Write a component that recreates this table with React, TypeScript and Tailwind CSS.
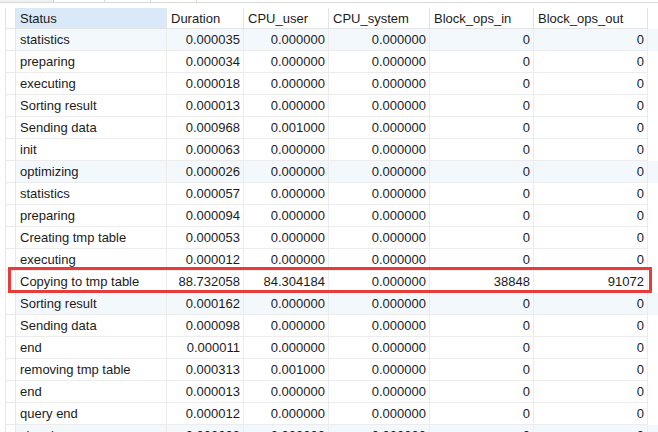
import React from "react";

type Row = {
  status: string;
  duration: string;
  cpuUser: string;
  cpuSystem: string;
  opsIn: string;
  opsOut: string;
};

const z = "0.000000";

const rows: Row[] = [
  ["statistics", "0.000035"],
  ["preparing", "0.000034"],
  ["executing", "0.000018"],
  ["Sorting result", "0.000013"],
  ["Sending data", "0.000968", "0.001000"],
  ["init", "0.000063"],
  ["optimizing", "0.000026"],
  ["statistics", "0.000057"],
  ["preparing", "0.000094"],
  ["Creating tmp table", "0.000053"],
  ["executing", "0.000012"],
  ["Copying to tmp table", "88.732058", "84.304184", z, "38848", "91072"],
  ["Sorting result", "0.000162"],
  ["Sending data", "0.000098"],
  ["end", "0.000011"],
  ["removing tmp table", "0.000313", "0.001000"],
  ["end", "0.000013"],
  ["query end", "0.000012"],
  ["cleaning up", "0.000009"],
].map((r) => ({
  status: r[0],
  duration: r[1],
  cpuUser: r[2] ?? z,
  cpuSystem: r[3] ?? z,
  opsIn: r[4] ?? "0",
  opsOut: r[5] ?? "0",
}));

const cols = [
  { key: "status", label: "Status", w: "w-[151px]", right: false },
  { key: "duration", label: "Duration", w: "w-[77px]", right: true },
  { key: "cpuUser", label: "CPU_user", w: "w-[85px]", right: true },
  { key: "cpuSystem", label: "CPU_system", w: "w-[101px]", right: true },
  { key: "opsIn", label: "Block_ops_in", w: "w-[104px]", right: true },
  { key: "opsOut", label: "Block_ops_out", w: "w-[114px]", right: true },
] as const;

export default function App() {
  return (
    <div
      className="w-[658px] h-[432px] overflow-hidden bg-white text-[13px] text-[#1b1b1b]"
      style={{ fontFamily: '"Liberation Sans", Arial, sans-serif' }}
    >
      {/* tab strip */}
      <div className="flex h-[3px] border-b border-[#d9d9d9]">
        <div className="w-[54px] bg-[#f0f0f0] border-r border-[#d0d0d0]" />
        <div className="w-[51px] border-r border-[#d9d9d9]" />
        <div className="w-[46px] border-r border-[#d9d9d9]" />
        <div className="w-[46px] border-r border-[#d9d9d9]" />
      </div>

      <div className="relative mt-[5px]">
        {/* header */}
        <div className="flex h-[21px] leading-[19px]">
          <div className="w-[5px]" />
          <div className="w-[11px] border-l border-r border-b border-[#e3e3e3]" />
          {cols.map((c, i) => (
            <div
              key={c.key}
              className={`${c.w} pt-[1px] px-[4px] border-r border-b border-[#e3e3e3] ${
                i === 0 ? "bg-[#d9e9f7]" : "bg-white"
              }`}
            >
              {c.label}
            </div>
          ))}
        </div>

        {/* body */}
        {rows.map((r, idx) => (
          <div
            key={idx}
            className={`flex h-[22px] leading-[20px] ${idx % 6 === 0 ? "bg-[#f3f8fd]" : ""}`}
          >
            <div className="w-[5px] bg-white" />
            <div className="w-[11px] border-l border-r border-b border-[#e8e8e8] bg-white" />
            {cols.map((c) => (
              <div
                key={c.key}
                className={`${c.w} pt-[1px] border-r border-b border-[#ececec] whitespace-nowrap ${
                  c.right ? "text-right pr-[3px]" : "pl-[4px]"
                }`}
              >
                {r[c.key]}
              </div>
            ))}
          </div>
        ))}

        {/* highlight box */}
        <div className="absolute left-[8px] top-[259px] w-[644px] h-[26px] border-[3px] border-[#ea3b3b] pointer-events-none" />
      </div>
    </div>
  );
}
